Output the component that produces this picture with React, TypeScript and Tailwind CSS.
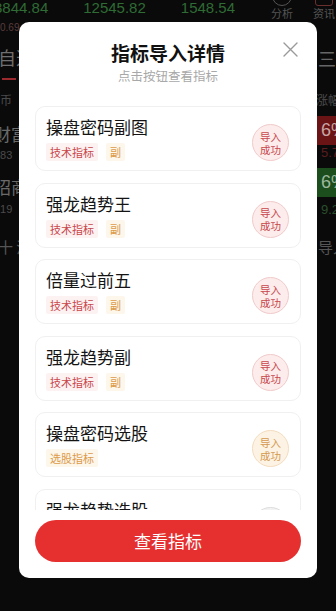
import React from "react";

type Tone = "red" | "orange" | "gray";

const items: { name: string; tags: { text: string; tone: Tone }[]; badge: Tone }[] = [
  { name: "操盘密码副图", tags: [{ text: "技术指标", tone: "red" }, { text: "副", tone: "orange" }], badge: "red" },
  { name: "强龙趋势王", tags: [{ text: "技术指标", tone: "red" }, { text: "副", tone: "orange" }], badge: "red" },
  { name: "倍量过前五", tags: [{ text: "技术指标", tone: "red" }, { text: "副", tone: "orange" }], badge: "red" },
  { name: "强龙趋势副", tags: [{ text: "技术指标", tone: "red" }, { text: "副", tone: "orange" }], badge: "red" },
  { name: "操盘密码选股", tags: [{ text: "选股指标", tone: "orange" }], badge: "orange" },
  { name: "强龙趋势选股", tags: [{ text: "选股指标", tone: "orange" }], badge: "gray" },
];

const tagClass: Record<Tone, string> = {
  red: "bg-[#fdf2f2] text-[#c8464b]",
  orange: "bg-[#fdf6ea] text-[#dc9a4a]",
  gray: "bg-[#f4f4f4] text-[#999999]",
};

const badgeClass: Record<Tone, string> = {
  red: "bg-[#fcecec] border-[#f1caca] text-[#c8464b]",
  orange: "bg-[#fdf3e4] border-[#f3dcbf] text-[#d5984f]",
  gray: "bg-[#f3f3f3] border-[#dddddd] text-[#999999]",
};

function Card({ item }: { item: (typeof items)[number] }) {
  return (
    <div className="flex h-[65px] shrink-0 justify-between rounded-[10px] border border-[#f0f0f0] bg-white pl-[10px] pr-[11px]">
      <div className="pt-[8px]">
        <div className="text-[17px] leading-[24px] text-[#141414]">{item.name}</div>
        <div className="mt-[4px] flex gap-[8px]">
          {item.tags.map((t) => (
            <span key={t.text} className={`h-[18px] rounded-[2px] px-[4px] text-[11px] leading-[18px] ${tagClass[t.tone]}`}>
              {t.text}
            </span>
          ))}
        </div>
      </div>
      <div
        className={`mt-[17px] flex h-[37px] w-[37px] flex-col items-center justify-center rounded-full border text-[10.5px] leading-[13px] ${badgeClass[item.badge]}`}
      >
        <span>导入</span>
        <span>成功</span>
      </div>
    </div>
  );
}

export default function App() {
  return (
    <div className="relative h-[611px] w-[336px] overflow-hidden bg-[#0a0a0a] font-['Noto_Sans_CJK_SC',sans-serif]">
      {/* dimmed app behind the dialog */}
      <div className="flex h-[46px] justify-between">
        <div>
          <div className="-ml-[6px] flex gap-[35px] font-['Liberation_Sans',sans-serif] text-[15px] leading-[16px] text-[#2f6b34]">
            <span>3844.84</span>
            <span>12545.82</span>
            <span>1548.54</span>
          </div>
          <div className="mt-[6px] font-['Liberation_Sans',sans-serif] text-[10px] leading-[12px] text-[#5a3c3c]">0.69</div>
        </div>
        <div className="flex gap-[20px] pr-[1px]">
          <div className="flex flex-col items-center">
            <div className="-mt-[14px] h-[20px] w-[20px] rounded-full border border-[#555]" />
            <span className="mt-[1px] text-[11px] leading-[12px] text-[#555]">分析</span>
          </div>
          <div className="flex flex-col items-center">
            <div className="-mt-[14px] h-[20px] w-[18px] rounded-[3px] border border-[#6a3030]" />
            <span className="mt-[1px] text-[11px] leading-[12px] text-[#555]">资讯</span>
          </div>
        </div>
      </div>

      <div className="flex items-center justify-between">
        <div className="-ml-[2px]">
          <div className="text-[18px] leading-[22px] text-[#6f6f6f]">自选</div>
          <div className="ml-[4px] mt-[10px] h-[2px] w-[14px] bg-[#9a2a2e]" />
        </div>
        <div className="-mt-[10px] text-[18px] text-[#666]">三</div>
      </div>

      <div className="mt-[12px] flex justify-between text-[12px] leading-[16px] text-[#4a4a4a]">
        <span>币</span>
        <span className="-mr-[4px]">涨幅</span>
      </div>

      <div className="mt-[8px] flex flex-col gap-[21px]">
        <div className="flex justify-between">
          <div className="-ml-[6px] pt-[7px]">
            <div className="text-[17px] leading-[22px] text-[#6a6a6a]">财富</div>
            <div className="mt-[4px] font-['Liberation_Sans',sans-serif] text-[11px] leading-[12px] text-[#4a4a4a]">883</div>
          </div>
          <div className="-mr-[10px] w-[29px]">
            <div className="flex h-[29px] items-center bg-[#6a1416] pl-[4px] font-['Liberation_Sans',sans-serif] text-[18px] text-[#c9a4a4]">6%</div>
            <div className="mt-[1px] pl-[4px] font-['Liberation_Sans',sans-serif] text-[13px] leading-[14px] text-[#5a1d1f]">5.7</div>
          </div>
        </div>
        <div className="-mt-[14px] flex justify-between">
          <div className="-ml-[6px] pt-[8px]">
            <div className="text-[17px] leading-[22px] text-[#6a6a6a]">招商</div>
            <div className="mt-[5px] font-['Liberation_Sans',sans-serif] text-[11px] leading-[12px] text-[#4a4a4a]">019</div>
          </div>
          <div className="-mr-[10px] w-[29px]">
            <div className="flex h-[29px] items-center bg-[#1b4d1d] pl-[4px] font-['Liberation_Sans',sans-serif] text-[18px] text-[#9cb89c]">6%</div>
            <div className="mt-[6px] pl-[4px] font-['Liberation_Sans',sans-serif] text-[13px] leading-[14px] text-[#2b4f2c]">9.2</div>
          </div>
        </div>
        <div className="flex justify-between text-[15px] leading-[18px] text-[#555]">
          <span className="-ml-[2px]">十 沪</span>
          <span className="-mr-[12px]">导入</span>
        </div>
      </div>

      {/* dialog */}
      <div className="absolute left-[19px] top-[22px] flex h-[556px] w-[298px] flex-col rounded-[10px] bg-white">
        <button className="absolute right-[19px] top-[20px] h-[15px] w-[15px]">
          <svg viewBox="0 0 15 15" className="h-[15px] w-[15px]">
            <path d="M1 1L14 14M14 1L1 14" stroke="#9a9a9a" strokeWidth="1.4" strokeLinecap="round" />
          </svg>
        </button>
        <div className="pt-[18px] text-center">
          <div className="text-[19px] font-bold leading-[26px] text-[#111]">指标导入详情</div>
          <div className="mt-[2px] text-[12.5px] leading-[16px] text-[#a8a8a8]">点击按钮查看指标</div>
        </div>
        <div className="mt-[22px] flex flex-1 flex-col gap-[11.5px] overflow-hidden px-[16px]">
          {items.map((it) => (
            <Card key={it.name} item={it} />
          ))}
        </div>
        <button className="mx-[16px] mb-[16px] mt-[10px] h-[42px] shrink-0 rounded-full bg-[#e5302f] text-[17px] text-white">
          查看指标
        </button>
      </div>
    </div>
  );
}
